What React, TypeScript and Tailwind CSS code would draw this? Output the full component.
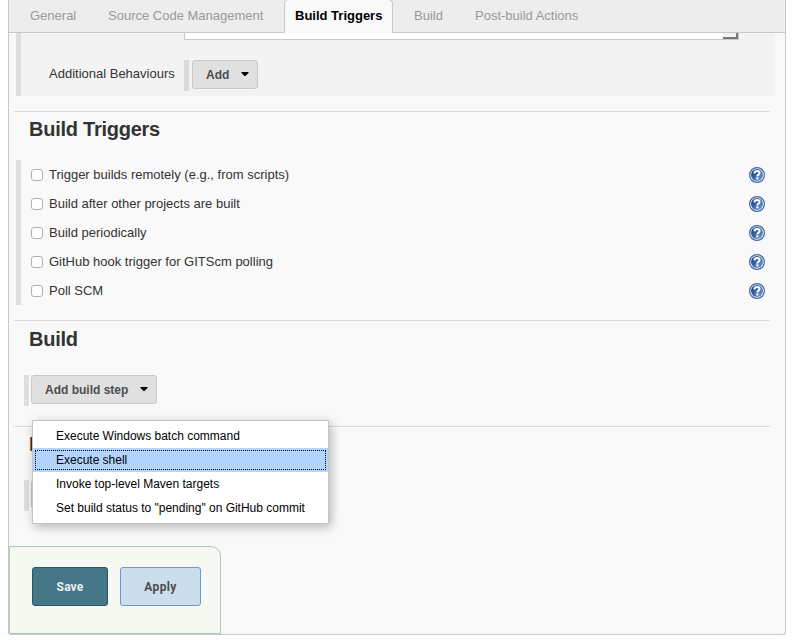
const triggers = [
  'Trigger builds remotely (e.g., from scripts)',
  'Build after other projects are built',
  'Build periodically',
  'GitHub hook trigger for GITScm polling',
  'Poll SCM',
];

const steps = [
  'Execute Windows batch command',
  'Execute shell',
  'Invoke top-level Maven targets',
  'Set build status to "pending" on GitHub commit',
];

function HelpIcon() {
  return (
    <svg width="16" height="16" viewBox="0 0 16 16" className="block" role="img" aria-label="Help">
      <defs>
        <linearGradient id="help" x1="0" y1="0" x2="1" y2="1">
          <stop offset="0.15" stopColor="#174286" />
          <stop offset="1" stopColor="#7ba3d6" />
        </linearGradient>
      </defs>
      <circle cx="8" cy="8" r="7.4" fill="#fff" stroke="#3b63a2" strokeWidth="1.2" />
      <circle cx="8" cy="8" r="6" fill="url(#help)" />
      <path d="M5.4 6.4C5.5 4.6 6.6 3.9 8 3.9s2.6.8 2.6 2.1c0 1.6-2.3 1.6-2.3 3.5" fill="none" stroke="#fff" strokeWidth="2" />
      <rect x="7.2" y="10.4" width="2.2" height="2" fill="#fff" />
    </svg>
  );
}

function Caret() {
  return (
    <svg width="8" height="5" viewBox="0 0 8 5" className="block">
      <path d="M0.5 0h7v1L4.5 4h-1L0.5 1z" fill="#000" />
    </svg>
  );
}

function MenuButton({ label, className }: { label?: string; className: string }) {
  return (
    <button
      className={`flex h-[29px] items-center justify-between rounded-[3px] border border-[#c8c8c8] bg-[#e0e0e0] pr-[8px] pl-[13px] text-[12px] font-bold text-[#4d4d4d] ${className}`}
    >
      <span>{label}</span>
      <Caret />
    </button>
  );
}

function StepMenu() {
  return (
    <div className="absolute top-[420px] left-[23px] z-10 h-[104px] w-[297px] border border-[#c4c4c4] bg-white pt-[3px] text-[12px] tracking-[-0.01px] text-black shadow-[2px_3px_10px_rgba(0,0,0,0.28)]">
      {steps.map((step, i) => (
        <div key={step} className={i === 1 ? 'h-6 bg-[#b3d4ff] px-[2px] py-[2px]' : 'h-6 px-[2px] py-[2px]'}>
          <div
            className={
              i === 1
                ? 'flex h-[20px] items-center border border-dotted border-black pl-5 whitespace-nowrap'
                : 'flex h-[20px] items-center border border-transparent pl-5 whitespace-nowrap'
            }
          >
            {step}
          </div>
        </div>
      ))}
    </div>
  );
}

export default function App() {
  return (
    <div className="h-[643px] w-[796px] overflow-hidden bg-white font-['Liberation_Sans',sans-serif] text-[13px] leading-[16px] text-[#333]">
      <div className="relative ml-2 flex h-[635px] w-[778px] flex-col rounded-b-[3px] border border-t-0 border-[#c8c8c8] bg-[#f9f9f9]">
        <nav className="flex h-[33px] shrink-0 border-b border-[#c8c8c8] bg-[#ededed] pl-[21px] text-[#999]">
          <span className="w-[78px] pt-2">General</span>
          <span className="w-[176px] pt-2 whitespace-nowrap">Source Code Management</span>
          <span className="-mt-px h-[34px] w-[109px] rounded-t-[5px] border border-b-0 border-[#c8c8c8] bg-[#f9f9f9] pt-2 pl-[10px] font-bold whitespace-nowrap text-black">
            Build Triggers
          </span>
          <span className="w-[82px] pt-2 pl-[21px]">Build</span>
          <span className="pt-2 whitespace-nowrap">Post-build Actions</span>
        </nav>

        <section className="ml-[7px] h-[63px] w-[759px] shrink-0 border-l-[5px] border-[#dedede] bg-[#f3f3f3]">
          <div className="ml-[163px] flex h-[7px] w-[555px] justify-end border border-t-0 border-[#c8c8c8] bg-white">
            <div className="h-[6px] w-[15px] border-r-2 border-b-2 border-[#777] bg-[#f3f3f3]" />
          </div>
          <div className="mt-5 flex pl-7">
            <span className="w-[135px] pt-[6px]">Additional Behaviours</span>
            <div className="h-[31px] w-[5px] bg-[#dadada]" />
            <MenuButton label="Add" className="ml-[3px] w-[66px]" />
          </div>
        </section>

        <section className="mt-[15px] ml-[5px] w-[756px] shrink-0 border-t border-[#dadada]">
          <h2 className="mt-[5px] ml-[15px] text-[20px] leading-6 font-bold tracking-[-0.25px]">Build Triggers</h2>
          <div className="mt-[19px] ml-[2px] border-l-[5px] border-[#dedede]">
            {triggers.map((trigger) => (
              <label key={trigger} className="flex h-[29px] items-center pr-[5px] pl-[10px]">
                <input
                  type="checkbox"
                  className="mr-[6px] size-3 shrink-0 appearance-none rounded-[3px] border border-[#b0b0b0] bg-white"
                />
                <span className="grow">{trigger}</span>
                <HelpIcon />
              </label>
            ))}
          </div>
        </section>

        <section className="mt-[15px] ml-[5px] h-[106px] w-[756px] shrink-0 border-t border-[#dadada]">
          <h2 className="mt-[6px] ml-[15px] text-[20px] leading-6 font-bold tracking-[-0.25px]">Build</h2>
          <div className="mt-6 ml-[10px] flex">
            <div className="h-[31px] w-[5px] bg-[#dedede]" />
            <MenuButton label="Add build step" className="ml-[2px] w-[126px]" />
          </div>
        </section>

        <section className="ml-[5px] h-[120px] w-[756px] shrink-0 border-t border-[#dadada]">
          <h2 className="mt-[5px] ml-[15px] w-4 overflow-hidden text-[20px] leading-6 font-bold">P</h2>
          <div className="mt-6 ml-[10px] flex">
            <div className="h-[31px] w-[5px] bg-[#dedede]" />
            <MenuButton className="ml-[2px] w-[165px]" />
          </div>
        </section>

        <footer className="flex h-[88px] w-[212px] shrink-0 gap-3 rounded-tr-[10px] border border-[#a9cdb9] bg-[#f6f9f2] pt-5 pl-[22px] font-['Roboto',sans-serif] text-[12px] font-bold">
          <button className="h-[39px] w-[76px] rounded-[3px] border border-[#2d5365] bg-[#457788] tracking-[0.15px] text-[#eee]">Save</button>
          <button className="h-[39px] w-[81px] rounded-[3px] border border-[#6799d3] bg-[#ccddec] tracking-[0.4px] text-[#4d4d4d]">Apply</button>
        </footer>
        <StepMenu />
      </div>
    </div>
  );
}
